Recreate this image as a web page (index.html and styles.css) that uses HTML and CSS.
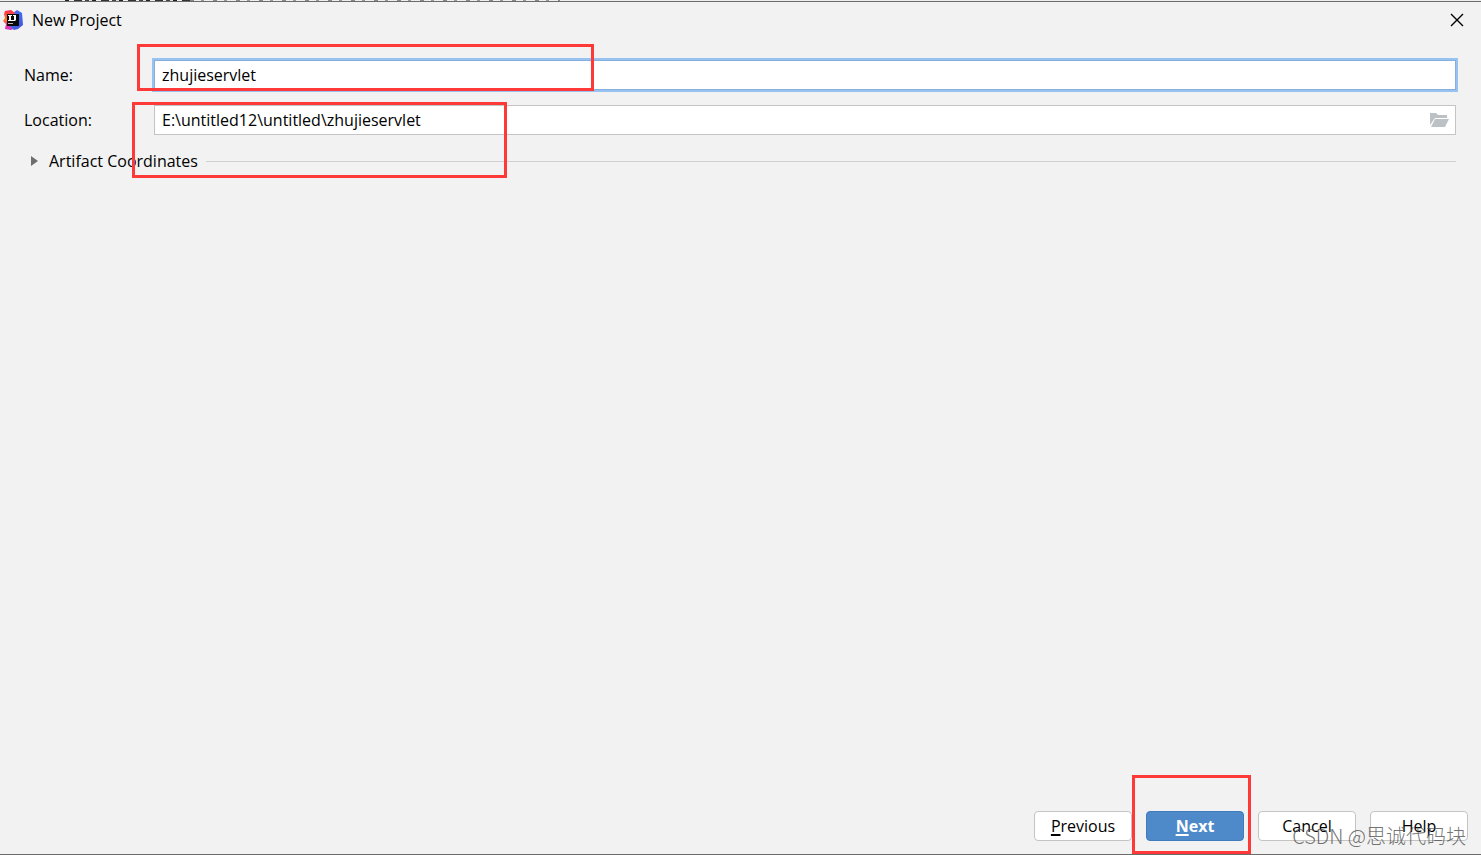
FILE: index.html
```
<!DOCTYPE html>
<html lang="en">
<head>
    <meta charset="UTF-8">
    <meta name="viewport" content="width=device-width, initial-scale=1.0">
    <title>New Project</title>
    <link rel="stylesheet" href="styles.css">
</head>
<body>

    <div class="backdrop"></div>

    <div class="dialog">
        <header class="titlebar">
            <svg class="app-icon" viewBox="0 0 20 20" aria-hidden="true">
                <defs>
                    <linearGradient id="warm" x1="0" y1="0" x2="0" y2="1">
                        <stop offset="0" stop-color="#fe2857"/>
                        <stop offset="0.5" stop-color="#fc801d"/>
                        <stop offset="0.7" stop-color="#f0318c"/>
                        <stop offset="1" stop-color="#c837c8"/>
                    </linearGradient>
                    <linearGradient id="cool" x1="0" y1="0" x2="1" y2="1">
                        <stop offset="0" stop-color="#7256e8"/>
                        <stop offset="0.5" stop-color="#3b6cf0"/>
                        <stop offset="1" stop-color="#4b4bd8"/>
                    </linearGradient>
                </defs>
                <path fill="url(#cool)" d="M10 3l4-3 5 3 1 12-5 4-4 1-6-4z"/>
                <path fill="url(#warm)" d="M2 1l6-1 4 3-5 13 3 3-2 1-6-1 1-5-3-3 2-3-1-4z"/>
                <path fill="#0a0a0a" d="M4 4h12v12H4z"/>
                <path fill="#fff" d="M5 5h4v1H8v4h1v1H5v-1h1V6H5zM10 5h3v5l-1 1H9v-1h2V6h-1z"/>
                <path fill="#bbb" d="M5 13h5v1H5z"/>
            </svg>
            <h1 class="title">New Project</h1>
            <button class="close" type="button" aria-label="Close">
                <svg viewBox="0 0 12 12" aria-hidden="true"><path d="M0 0l12 12M12 0L0 12"/></svg>
            </button>
        </header>

        <form class="form">
            <div class="row">
                <label for="name">Name:</label>
                <input class="field field-active" type="text" id="name" value="zhujieservlet">
            </div>
            <div class="row">
                <label for="location">Location:</label>
                <div class="field path-field">
                    <input type="text" id="location" value="E:\untitled12\untitled\zhujieservlet">
                    <button class="browse" type="button" aria-label="Browse">
                        <svg viewBox="0 0 19 14" aria-hidden="true"><path d="M0 0h6l2 2h9v3H5l-5 7z"/><path d="M5 6h14l-4 8H1z"/></svg>
                    </button>
                </div>
            </div>
            <button class="expander" type="button" aria-expanded="false">
                <svg viewBox="0 0 7 10" aria-hidden="true"><path d="M0 0l7 5-7 5z"/></svg>
                Artifact Coordinates
            </button>

            <div class="mark mark-name"></div>
            <div class="mark mark-location"></div>
        </form>

        <footer class="actions">
            <button class="btn" type="button"><u>P</u>revious</button>
            <button class="btn btn-primary" type="button"><u>N</u>ext</button>
            <button class="btn" type="button">Cancel</button>
            <button class="btn" type="button">Help</button>

            <div class="mark mark-next"></div>
            <span class="watermark">CSDN @思诚代码块</span>
        </footer>
    </div>

</body>
</html>
```
FILE: styles.css
```
* {
    box-sizing: border-box;
    margin: 0;
    padding: 0;
}

body {
    display: flex;
    flex-direction: column;
    min-height: 100vh;
    background: #f2f2f2;
    color: #000;
    font: 16px/22px "Open Sans", "Noto Sans", "Noto Sans CJK SC", sans-serif;
}

button,
input {
    font: inherit;
    color: inherit;
    border: none;
    outline: none;
    background: none;
}

/* sliver of the editor behind the dialog */
.backdrop {
    height: 1px;
    background:
        repeating-linear-gradient(to right, #222 0 4px, #eee 4px 9px, #333 9px 17px, #eee 17px 20px, #444 20px 24px, #ddd 24px 27px) 65px 0 / 125px 1px no-repeat,
        repeating-linear-gradient(to right, #888 0 4px, #eee 4px 11px, #999 11px 14px, #eee 14px 23px) 190px 0 / 370px 1px no-repeat,
        #eee;
}

.dialog {
    flex: 1;
    display: flex;
    flex-direction: column;
    border-top: 1px solid #6c6c6c;
    border-bottom: 1px solid #6c6c6c;
}

.titlebar {
    display: flex;
    align-items: center;
    height: 36px;
    padding: 0 18px 0 3px;
}

.app-icon {
    width: 20px;
    height: 20px;
    margin-right: 9px;
}

.title {
    flex: 1;
    font-size: 16px;
    font-weight: normal;
}

.close {
    display: flex;
    cursor: pointer;
}

.close svg {
    width: 12px;
    height: 12px;
    overflow: visible;
    stroke: #000;
    stroke-width: 1.4;
    fill: none;
}

.form {
    position: relative;
    flex: 1;
    display: flex;
    flex-direction: column;
    gap: 15px;
    padding: 22px 25px 0 24px;
}

.row {
    display: flex;
    align-items: center;
}

.row label {
    width: 130px;
}

.field {
    flex: 1;
    height: 30px;
    padding: 0 7px;
    border: 1px solid #c4c4c4;
    background: #fff;
}

.field-active {
    border-color: #87afda;
    box-shadow: 0 0 0 2px #97c3f3;
}

.path-field {
    display: flex;
    align-items: center;
    padding-right: 6px;
}

.path-field input {
    flex: 1;
}

.browse {
    display: flex;
    cursor: pointer;
}

.browse svg {
    width: 19px;
    height: 14px;
    fill: #bcc1c5;
}

.expander {
    display: flex;
    align-items: center;
    padding-left: 7px;
    cursor: pointer;
}

.expander svg {
    width: 7px;
    height: 10px;
    margin-right: 11px;
    fill: #6e6e6e;
}

.expander::after {
    content: "";
    flex: 1;
    height: 1px;
    margin-left: 8px;
    background: #d1d1d1;
}

.actions {
    position: relative;
    display: flex;
    justify-content: flex-end;
    gap: 14px;
    padding: 0 13px 13px;
}

.btn {
    width: 98px;
    height: 30px;
    border: 1px solid #c4c4c4;
    border-radius: 4px;
    background: #fff;
    cursor: pointer;
}

.btn-primary {
    border-color: #3f7bbd;
    background: #4e8ac9;
    color: #fff;
    font-weight: bold;
}

.btn u {
    text-decoration-thickness: 2px;
    text-underline-offset: 2px;
}

/* red highlight boxes */
.mark {
    position: absolute;
    border: 3px solid #ff3838;
    pointer-events: none;
}

.mark-name {
    top: 6px;
    left: 137px;
    width: 457px;
    height: 47px;
}

.mark-location {
    top: 64px;
    left: 132px;
    width: 375px;
    height: 76px;
}

.mark-next {
    right: 230px;
    bottom: 0;
    width: 119px;
    height: 79px;
}

.watermark {
    position: absolute;
    right: 15px;
    bottom: 4px;
    color: rgba(80, 80, 80, 0.8);
    font: 300 20px/28px "Noto Sans CJK SC", sans-serif;
    pointer-events: none;
}
```
